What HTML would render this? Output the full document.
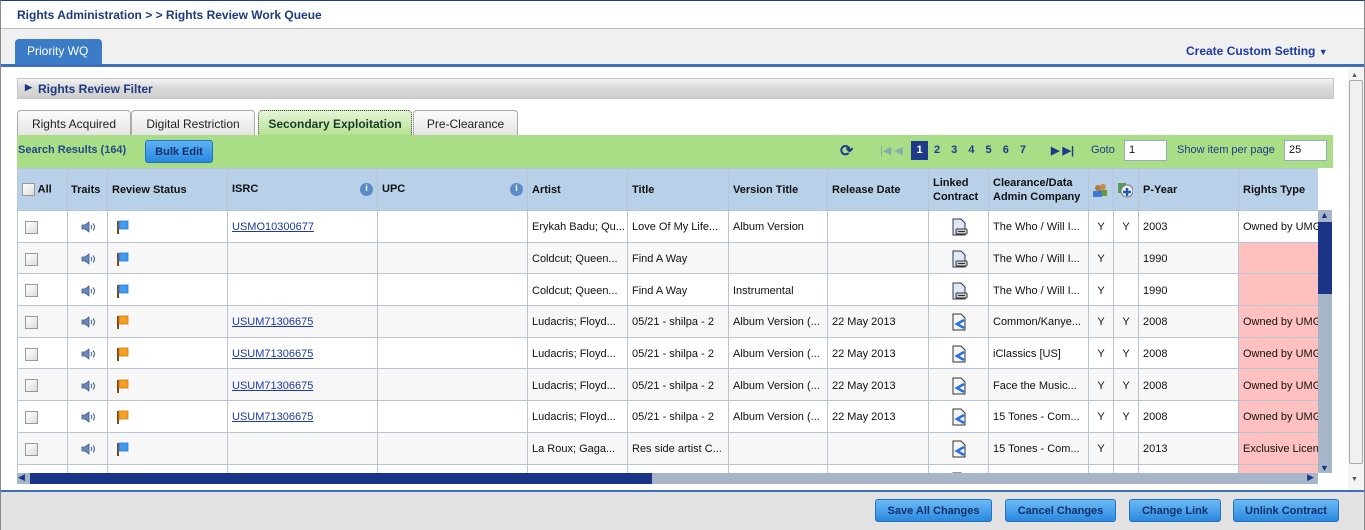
<!DOCTYPE html>
<html><head><meta charset="utf-8">
<style>
*{box-sizing:border-box;margin:0;padding:0}
body{width:1365px;height:530px;overflow:hidden;font-family:"Liberation Sans",Arial,sans-serif;font-size:11px;color:#111;background:#fff;position:relative}
.abs{position:absolute}
.frame{left:0;top:0;width:1365px;height:530px;border-left:1px solid #888;border-right:1px solid #888;border-top:1px solid #1a3a8a}
.crumb{left:17px;top:8px;font-weight:bold;font-size:12px;color:#1d3a7e}
.graybar{left:1px;top:28px;width:1363px;height:37px;background:#f0f0f0;border-top:1px solid #bbb}
.ptab{left:15px;top:39px;width:87px;height:26px;background:#3c7cc6;color:#fff;border-radius:4px 4px 0 0;font-size:12px;padding:5px 0 0 12px}
.blueline{left:1px;top:64px;width:1363px;height:3px;background:#3a70bd}
.ccs{left:1186px;top:44px;font-weight:bold;font-size:12px;color:#1d3a9e}
.vscroll{left:1348px;top:68px;width:16px;height:422px;background:#f4f4f4}
.filter{left:17px;top:78px;width:1317px;height:21px;background:linear-gradient(#f4f4f4,#dcdcdc 40%,#cfcfcf);border:1px solid #c6c6c6;font-weight:bold;font-size:12px;color:#1d3a7e;padding:3px 0 0 20px}
.tab{top:110px;height:26px;border:1px solid #aaa;border-bottom:none;border-radius:4px 4px 0 0;background:linear-gradient(#fbfbfb,#e4e4e4);font-size:12px;color:#222;text-align:center;padding-top:6px}
.green{left:17px;top:135px;width:1316px;height:33px;background:#aade86}
.sr{left:18px;top:144px;font-weight:bold;color:#1d4a8a}
.bulk{left:145px;top:140px;width:68px;height:23px;background:linear-gradient(#5eb2f4,#2a88e0);border:1px solid #2272c0;border-radius:3px;font-weight:bold;color:#10306a;text-align:center;padding-top:5px}
.pg{top:144px;color:#1d3a8a;font-weight:bold;font-size:11px}
.inp{top:140px;height:21px;background:#fff;border:1px solid #9ab;padding:3px 0 0 4px;font-size:11px}
table{border-collapse:collapse;table-layout:fixed;position:absolute;left:17px;top:168px}
td,th{border:1px solid #b8c4d4;white-space:nowrap;overflow:hidden;padding:0 4px;text-align:left;font-size:11px}
th{background:#b8d0e8;height:42px;font-weight:bold;color:#111}
td{height:31.7px;padding-top:2px}
tr.alt td{background:#f7f7f7}
td.pk{background:#ffc0c0!important}
.cb{display:inline-block;width:13px;height:13px;border:1px solid #999;background:linear-gradient(135deg,#fff,#ddd);vertical-align:middle}
a{color:#1d3a9e;text-decoration:underline}
.c{text-align:center}
.tclip{left:17px;top:168px;width:1301px;height:305px;overflow:hidden}
.footer{left:1px;top:492px;width:1363px;height:38px;background:#e2e2e2}
.fbl{left:1px;top:490px;width:1363px;height:3px;background:#3a70bd}
.btn{top:499px;height:23px;background:linear-gradient(#6cbaf6,#2a88e0);border:1px solid #2272c0;border-radius:3px;font-weight:bold;color:#10306a;text-align:center;padding-top:5px}
svg{vertical-align:middle}
</style></head><body>
<div class="abs frame"></div>
<div class="abs crumb">Rights Administration &gt; &gt; Rights Review Work Queue</div>
<div class="abs graybar"></div>
<div class="abs ptab">Priority WQ</div>
<div class="abs ccs">Create Custom Setting <span style="font-size:9px">&#9660;</span></div>
<div class="abs blueline"></div>
<div class="abs vscroll"><div style="position:absolute;left:3px;top:4px;font-size:7px;color:#555">&#9650;</div><div style="position:absolute;left:1px;top:12px;width:14px;height:384px;border:1px solid #aaa;border-radius:2px;background:#f0f0f0"></div><div style="position:absolute;left:3px;top:408px;font-size:7px;color:#555">&#9660;</div></div>
<div class="abs filter"><span style="position:absolute;left:7px;top:3px;font-size:9px">&#9654;</span>Rights Review Filter</div>
<div class="abs tab" style="left:17px;width:114px">Rights Acquired</div>
<div class="abs tab" style="left:131px;width:124px">Digital Restriction</div>
<div class="abs tab" style="left:258px;width:154px;background:linear-gradient(#e6f5d8,#b5e292);border:1px dotted #444;font-weight:bold;color:#1a3a2a">Secondary Exploitation</div>
<div class="abs tab" style="left:413px;width:105px">Pre-Clearance</div>
<div class="abs green"></div>
<div class="abs sr">Search Results (164)</div>
<div class="abs bulk">Bulk Edit</div>
<div class="abs pg" style="left:840px;top:141px;font-size:16px">&#10227;</div>
<div class="abs pg" style="left:880px;color:#8aa;font-weight:normal">|&#9664; &#9664;</div>
<div class="abs" style="left:911px;top:141px;width:17px;height:19px;background:#1d3a8a;color:#fff;text-align:center;padding-top:3px;font-weight:bold">1</div>
<div class="abs pg" style="left:934px;word-spacing:8px">2 3 4 5 6 7</div>
<div class="abs pg" style="left:1051px">&#9654; &#9654;|</div>
<div class="abs pg" style="left:1091px;font-weight:normal">Goto</div>
<div class="abs inp" style="left:1124px;width:43px">1</div>
<div class="abs pg" style="left:1177px;font-weight:normal">Show item per page</div>
<div class="abs inp" style="left:1284px;width:43px">25</div>
<div class="abs tclip">
<table style="left:0;top:0;width:1321px">
<colgroup><col style="width:50px"><col style="width:40px"><col style="width:120px"><col style="width:150px"><col style="width:150px"><col style="width:100px"><col style="width:101px"><col style="width:99px"><col style="width:101px"><col style="width:60px"><col style="width:100px"><col style="width:25px"><col style="width:25px"><col style="width:100px"><col style="width:100px"></colgroup>
<tr><th><span class="cb"></span> All</th><th style="padding:0 3px">Traits</th><th>Review Status</th><th>ISRC<span style="float:right;display:inline-block;width:13px;height:13px;border-radius:50%;background:#5a8ac8;color:#fff;font-size:9px;text-align:center">i</span></th><th>UPC<span style="float:right;display:inline-block;width:13px;height:13px;border-radius:50%;background:#5a8ac8;color:#fff;font-size:9px;text-align:center">i</span></th><th>Artist</th><th>Title</th><th>Version Title</th><th>Release Date</th><th style="white-space:normal;line-height:14px">Linked Contract</th><th style="white-space:normal;line-height:14px">Clearance/Data Admin Company</th>
<th style="padding:0 3px"><svg width="16" height="16"><circle cx="11" cy="5" r="3" fill="#c8884a"/><rect x="7" y="8" width="8" height="6" fill="#6a9a3a"/><circle cx="6" cy="6" r="3" fill="#b8783a"/><rect x="1" y="9" width="9" height="6" fill="#3a7ad8"/></svg></th>
<th style="padding:0 3px"><svg width="16" height="16"><rect x="1" y="1" width="8" height="10" fill="#5a9a5a"/><circle cx="10" cy="9" r="6" fill="#eee" stroke="#777"/><path d="M10 6v8M6 10h8" stroke="#1a5ab8" stroke-width="2.5"/></svg></th>
<th>P-Year</th><th>Rights Type</th></tr>
<tbody id="b"></tbody>
</table>
</div>
<script>
var R=[["USMO10300677","Erykah Badu; Qu...","Love Of My Life...","Album Version","","The Who / Will I...","Y","Y","2003","Owned by UMG",0,1,0],
["","Coldcut; Queen...","Find A Way","","","The Who / Will I...","Y","","1990","",1,1,0],
["","Coldcut; Queen...","Find A Way","Instrumental","","The Who / Will I...","Y","","1990","",1,1,0],
["USUM71306675","Ludacris; Floyd...","05/21 - shilpa - 2","Album Version (...","22 May 2013","Common/Kanye...","Y","Y","2008","Owned by UMG",1,2,1],
["USUM71306675","Ludacris; Floyd...","05/21 - shilpa - 2","Album Version (...","22 May 2013","iClassics [US]","Y","Y","2008","Owned by UMG",1,2,1],
["USUM71306675","Ludacris; Floyd...","05/21 - shilpa - 2","Album Version (...","22 May 2013","Face the Music...","Y","Y","2008","Owned by UMG",1,2,1],
["USUM71306675","Ludacris; Floyd...","05/21 - shilpa - 2","Album Version (...","22 May 2013","15 Tones - Com...","Y","Y","2008","Owned by UMG",1,2,1],
["","La Roux; Gaga...","Res side artist C...","","","15 Tones - Com...","Y","","2013","Exclusive License",1,2,0],
["","","","","","","","","","",1,2,0]];
var spk='<svg width="16" height="14"><path d="M2 5h3l4-3v10l-4-3H2z" fill="#6a88b8" stroke="#3a5a90" stroke-width=".8"/><path d="M11 5q1.5 2 0 4M13 3.5q3 3.5 0 7" fill="none" stroke="#3a5a90" stroke-width="1"/></svg>';
var h="";
R.forEach(function(r,i){
var flag='<svg width="14" height="14"><rect x="1" y="1" width="2" height="13" fill="#7a4a1a"/><rect x="3" y="1" width="9" height="8" fill="'+(r[12]?'#f5a020':'#3c9af0')+'" stroke="'+(r[12]?'#d07a10':'#2a7ad0')+'" stroke-width=".8"/></svg>';
var doc=r[11]==1?'<svg width="18" height="18"><path d="M3 1h8l4 4v12H3z" fill="#dde8f8" stroke="#334"/><rect x="6" y="11" width="11" height="5" rx="1" fill="#ccc" stroke="#333"/><path d="M8 13.5h7" stroke="#333"/></svg>':'<svg width="18" height="18"><path d="M3 1h8l4 4v12H3z" fill="#f4f4f4" stroke="#333"/><path d="M14 7L7 11l7 4" fill="none" stroke="#2a70e0" stroke-width="2.5"/></svg>';
h+='<tr'+(i%2?' class="alt"':'')+'><td style="padding-left:7px"><span class="cb"></span></td><td class="c">'+spk+'</td><td style="padding-left:8px">'+flag+'</td><td>'+(r[0]?'<a>'+r[0]+'</a>':'')+'</td><td></td><td>'+r[1]+'</td><td>'+r[2]+'</td><td>'+r[3]+'</td><td>'+r[4]+'</td><td class="c">'+doc+'</td><td>'+r[5]+'</td><td class="c">'+r[6]+'</td><td class="c">'+r[7]+'</td><td>'+r[8]+'</td><td'+(r[10]?' class="pk"':'')+'>'+r[9]+'</td></tr>';
});
document.getElementById("b").innerHTML=h;
</script>
<div class="abs" style="left:1318px;top:210px;width:14px;height:263px;background:#a6b6c8"><div style="position:absolute;left:0;top:12px;width:14px;height:72px;background:#1a3588"></div><div style="position:absolute;left:2px;top:0;font-size:9px;color:#1a3588;line-height:10px">&#9650;</div><div style="position:absolute;left:2px;bottom:0;font-size:9px;color:#1a3588;line-height:10px">&#9660;</div></div>
<div class="abs" style="left:17px;top:473px;width:1301px;height:11px;background:#a6b6c8"><div style="position:absolute;left:13px;top:0;width:622px;height:11px;background:#1a3588"></div><div style="position:absolute;left:1px;top:-1px;font-size:9px;color:#1a3588">&#9664;</div><div style="position:absolute;right:4px;top:-1px;font-size:9px;color:#1a3588">&#9654;</div></div>
<div class="abs fbl"></div>
<div class="abs footer"></div>
<div class="abs btn" style="left:875px;width:117px">Save All Changes</div>
<div class="abs btn" style="left:1005px;width:111px">Cancel Changes</div>
<div class="abs btn" style="left:1129px;width:92px">Change Link</div>
<div class="abs btn" style="left:1233px;width:106px">Unlink Contract</div>
</body></html>
